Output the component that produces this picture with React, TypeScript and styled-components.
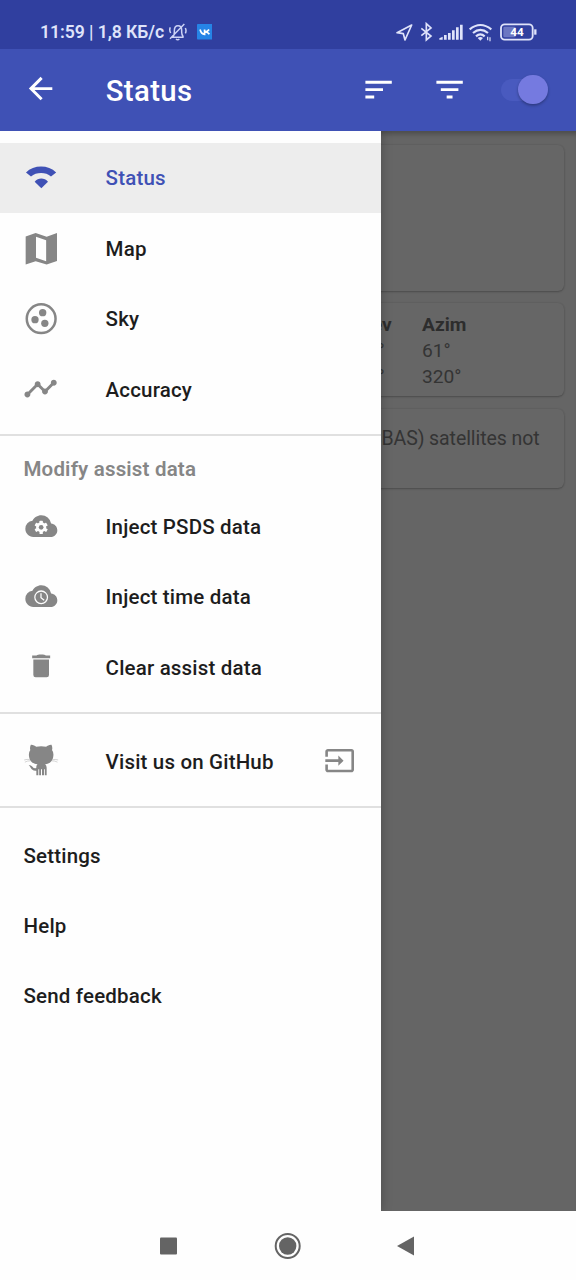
import React from "react";
import styled, { createGlobalStyle } from "styled-components";
import { MdArrowBack, MdFilterList, MdInput, MdSort, MdTimeline } from "react-icons/md";

const GlobalStyle = createGlobalStyle`
  *, *::before, *::after { box-sizing: border-box; }
  html, body { margin: 0; padding: 0; }
  body { font-family: Roboto, "Noto Sans", sans-serif; overflow: hidden; }
  svg { display: block; flex: none; }
`;

const Screen = styled.div`
  width: 576px;
  height: 1280px;
  display: flex;
  flex-direction: column;
  background: #fefefe;
  overflow: hidden;
`;

const StatusBar = styled.div`
  height: 49px;
  flex: none;
  display: flex;
  align-items: center;
  padding: 15px 37.3px 0 40px;
  background: #303f9f;
  color: #dfe3fa;
`;

const Clock = styled.span`
  width: 128px;
  font-size: 17.6px;
  font-weight: 600;
  letter-spacing: -0.06px;
  white-space: nowrap;
`;

const VkBadge = styled.svg`
  margin-left: 9.5px;
`;

const StatusIcons = styled.div`
  margin-left: auto;
  display: flex;
  align-items: center;
`;

const AppBar = styled.header`
  height: 82px;
  flex: none;
  display: flex;
  align-items: center;
  padding: 0 28.3px 1px 22.5px;
  background: #3f51b5;
  color: #fff;
  position: relative;
  z-index: 3;
`;

const BackIcon = styled(MdArrowBack)`
  margin-bottom: 1.5px;
`;

const Title = styled.h1`
  margin: 3px 0 0 48px;
  flex: 1;
  font-size: 29.3px;
  font-weight: 500;
  letter-spacing: 0.4px;
  line-height: 34px;
`;

const Actions = styled.div`
  display: flex;
  align-items: center;
  gap: 35.4px;
`;

const SwitchTrack = styled.div`
  width: 46.5px;
  height: 22px;
  margin-left: -1px;
  border-radius: 11px;
  background: #495abf;
  display: flex;
  align-items: center;
  justify-content: flex-end;
`;

const SwitchThumb = styled.div`
  width: 29.4px;
  height: 29.4px;
  flex: none;
  border-radius: 50%;
  background: #757ae0;
  box-shadow: 0 1.5px 3px rgba(0, 0, 0, 0.3);
`;

const Body = styled.main`
  height: 1080px;
  flex: none;
  position: relative;
  background: #656565;
  box-shadow: inset 0 6px 5px -3px rgba(0, 0, 0, 0.25);
  overflow: hidden;
`;

const Cards = styled.div`
  display: flex;
  flex-direction: column;
  gap: 12.3px;
  padding: 13.5px 12px 0;
`;

const Card = styled.section<{ $height: number }>`
  height: ${(p) => p.$height}px;
  border-radius: 6px;
  background: #666;
  box-shadow: 0 1px 2px rgba(0, 0, 0, 0.22), 0 0 2px rgba(0, 0, 0, 0.12);
  color: #343434;
`;

const SatelliteTable = styled.div`
  display: grid;
  grid-template-columns: 66px 142px;
  justify-content: end;
  padding-top: 9px;
  font-size: 19.2px;
  line-height: 26px;
`;

const HeadCell = styled.span`
  font-weight: 700;
  color: #2d2d2d;
`;

const Note = styled.p`
  margin: 0;
  padding: 17.4px 24.5px 0 0;
  font-size: 19.5px;
  line-height: 26px;
  letter-spacing: -0.08px;
  text-align: right;
  white-space: nowrap;
`;

const Drawer = styled.nav`
  position: absolute;
  inset: 0 auto 0 0;
  width: 381.3px;
  padding-top: 11.7px;
  background: #fefefe;
  box-shadow: 0 0 10px 1px rgba(0, 0, 0, 0.22);
`;

const MenuItem = styled.div<{ $active?: boolean }>`
  height: 70.4px;
  display: flex;
  align-items: center;
  padding: 0 25.8px 0 23.5px;
  gap: 46.9px;
  background: ${(p) => (p.$active ? "#ededed" : "transparent")};
  color: ${(p) => (p.$active ? "#3f51b5" : "#1d1d1d")};
  font-size: 20.5px;
  font-weight: 500;
  letter-spacing: 0.18px;
  white-space: nowrap;
`;

const Glyph = styled.svg<{ $active?: boolean }>`
  width: 35.2px;
  height: 35.2px;
  fill: ${(p) => (p.$active ? "#3f51b5" : "#868686")};
`;

const Label = styled.span`
  flex: 1;
  position: relative;
  top: 0.6px;
`;

const Divider = styled.hr`
  height: 1.6px;
  margin: 9.8px 0 12.2px;
  border: 0;
  background: #e0e0e0;
`;

const Subheader = styled.div`
  height: 55.4px;
  margin-top: -12.2px;
  padding: 20.5px 0 0 23.5px;
  color: #868686;
  font-size: 20.5px;
  font-weight: 600;
  letter-spacing: 0.18px;
  line-height: 26px;
`;

const NavBar = styled.footer`
  flex: 1;
  display: flex;
  align-items: center;
  justify-content: center;
  background: #fefefe;
`;

const CLOUD =
  "M19.35 10.04A7.49 7.49 0 0 0 12 4C9.11 4 6.6 5.64 5.35 8.04A5.994 5.994 0 0 0 0 14c0 3.31 2.69 6 6 6h13c2.76 0 5-2.24 5-5 0-2.64-2.05-4.78-4.65-4.96z";

/* Glyphs share one drawing grid; its origin leaves a small inset at the top left. */
const GRID = "1.5 -1 105.6 105.6";

const WifiGlyph = () => (
  <Glyph $active viewBox={GRID}>
    <path d="M7.5 36.5C31 13 74.5 13 98 36.5L82.5 48.5C67 35 38.5 35 22.5 48.5Z" />
    <path d="M33.5 64C44 51.5 63 51.5 73.5 64L53.5 83.5Z" />
  </Glyph>
);

const MapGlyph = () => (
  <Glyph viewBox={GRID}>
    <path
      fillRule="evenodd"
      d="M6.5 15.5 36.5 4.9 69.5 15.9 100.5 4.9V88.9L69.5 99.9 36.5 89.9 6.5 99.9ZM37.5 15.9V79.4L68 89.9V26.4Z"
    />
  </Glyph>
);

const SkyGlyph = () => (
  <Glyph viewBox={GRID}>
    <circle cx="53" cy="52.2" r="43.2" fill="none" stroke="#868686" strokeWidth="7.5" />
    <circle cx="57.5" cy="34" r="11" />
    <circle cx="34.5" cy="55" r="11" />
    <circle cx="64" cy="66" r="11" />
  </Glyph>
);

const TimelineGlyph = styled(MdTimeline)`
  margin: 0 0.5px 0 -0.5px;
`;

const CloudGearGlyph = () => (
  <Glyph viewBox={GRID}>
    <path d={CLOUD} transform="translate(5.5 1.1) scale(4 4.1)" />
    <g transform="translate(53 54)" fill="#fefefe">
      {[0, 60, 120].map((angle) => (
        <rect key={angle} x="-5" y="-20" width="10" height="40" rx="1.5" transform={`rotate(${angle})`} />
      ))}
      <circle r="15" />
      <circle r="7" fill="#868686" />
    </g>
  </Glyph>
);

const CloudClockGlyph = () => (
  <Glyph viewBox={GRID}>
    <path d={CLOUD} transform="translate(5.5 1.1) scale(4 4.1)" />
    <g fill="none" stroke="#fefefe" strokeWidth="3.8">
      <circle cx="53" cy="54" r="19" />
      <path d="M52.5 42V55L62 63" />
    </g>
  </Glyph>
);

const TrashGlyph = () => (
  <Glyph viewBox={GRID}>
    <path d="M26 18.5H39C42 15.5 45 15.5 53 15.5S64 15.5 67 18.5H80V26.5H26ZM29.5 30.5H76.5V77Q76.5 84 69.5 84H36.5Q29.5 84 29.5 77Z" />
  </Glyph>
);

const OctocatGlyph = () => (
  <Glyph viewBox={GRID}>
    <path d="M22 4.5C29 4 34 7.5 38 10Q53 7 68 10C72 7.5 77 4 84 4.5Q88 13 85.5 20Q91 27 89.5 38C88 54 79 61 65 62.5Q69.5 66 69.5 73V96H64V78H61.5V96H55.5V78H52.5V96H47V78H44.5V96H38.5V82C29 83 25 79 21.5 73.5Q19 69 15.5 65Q23 65 27 70Q31 76.5 38.5 74Q37.5 66 42 62.5C27 61 18 54 16.5 38Q15 27 20.5 20Q18 13 22 4.5Z" />
    <path
      d="M2 50Q11 47 19 49M4 56.5Q12 52 21 52.5M104 50Q95 47 87 49M102 56.5Q94 52 85 52.5"
      fill="none"
      stroke="#b8b8b8"
      strokeWidth="1.8"
    />
  </Glyph>
);

const BellOffIcon = () => (
  <svg width="19" height="18" viewBox="0 0 57 54" fill="none" stroke="#cdd3f5" strokeWidth="4.5">
    <path d="M11 43H47M15 42Q19 36 19 28V23Q19 8 30 8Q41 8 41 21V28Q41 36 46 42M24 48Q29 53 34 48M6 47 49 3M7 13Q3 21 8 30M52 15Q56 23 52 31" />
  </svg>
);

const VkIcon = () => (
  <VkBadge width="15.5" height="15.5" viewBox="0 0 45 45">
    <rect width="45" height="45" rx="2" fill="#2684e6" />
    <path
      d="M9 16Q12 29 22 30V16M23 23Q31 22 35 16M24 23Q31 23 36 30"
      fill="none"
      stroke="#fff"
      strokeWidth="5"
    />
  </VkBadge>
);

const SystemIcons = () => (
  <svg width="144" height="20" viewBox="0 0 432 60" fill="none" stroke="#dfe3fa">
    <path d="M6 32 50 9 30 54 25 35Z" strokeWidth="5" strokeLinejoin="round" />
    <path d="M79 19 108 42 94 54V5L108 18 79 41" strokeWidth="5" />
    <path
      d="M133 53V49L143 44V53ZM147 53V39H155V53ZM159 53V33H167V53ZM171 53V25H179V53ZM183 53V16H191V53ZM195 53V8H203V53Z"
      fill="#dfe3fa"
      stroke="none"
    />
    <path d="M224 22Q256-4 289 22M234 33Q256 14 279 33M243 43Q256 31 269 43" strokeWidth="6.5" />
    <path d="M248 48Q256 42 264 48L256 56Z" fill="#dfe3fa" stroke="none" />
    <path d="M278 44V55M285 46V58" strokeWidth="3.5" />
    <rect x="318" y="7" width="95" height="46" rx="11" strokeWidth="5.5" />
    <rect x="325" y="14" width="37" height="32" rx="4" fill="#6c77c2" stroke="none" />
    <path d="M421 22V38" strokeWidth="7" />
    <text
      x="366"
      y="42.5"
      textAnchor="middle"
      fill="#fff"
      stroke="none"
      fontFamily="Roboto"
      fontSize="35"
      fontWeight="700"
    >
      44
    </text>
  </svg>
);

export default function App() {
  return (
    <Screen>
      <GlobalStyle />
      <StatusBar>
        <Clock>11:59 | 1,8 КБ/с</Clock>
        <BellOffIcon />
        <VkIcon />
        <StatusIcons>
          <SystemIcons />
        </StatusIcons>
      </StatusBar>
      <AppBar>
        <BackIcon size={35.2} />
        <Title>Status</Title>
        <Actions>
          <MdSort size={35.2} />
          <MdFilterList size={35.2} />
          <SwitchTrack>
            <SwitchThumb />
          </SwitchTrack>
        </Actions>
      </AppBar>
      <Body>
        <Cards>
          <Card $height={146} />
          <Card $height={93.5}>
            <SatelliteTable>
              <HeadCell>Elev</HeadCell>
              <HeadCell>Azim</HeadCell>
              <span>15°</span>
              <span>61°</span>
              <span>15°</span>
              <span>320°</span>
            </SatelliteTable>
          </Card>
          <Card $height={79}>
            <Note>(SBAS) satellites not</Note>
          </Card>
        </Cards>
        <Drawer>
          <MenuItem $active>
            <WifiGlyph />
            <Label>Status</Label>
          </MenuItem>
          <MenuItem>
            <MapGlyph />
            <Label>Map</Label>
          </MenuItem>
          <MenuItem>
            <SkyGlyph />
            <Label>Sky</Label>
          </MenuItem>
          <MenuItem>
            <TimelineGlyph size={35.2} color="#868686" />
            <Label>Accuracy</Label>
          </MenuItem>
          <Divider />
          <Subheader>Modify assist data</Subheader>
          <MenuItem>
            <CloudGearGlyph />
            <Label>Inject PSDS data</Label>
          </MenuItem>
          <MenuItem>
            <CloudClockGlyph />
            <Label>Inject time data</Label>
          </MenuItem>
          <MenuItem>
            <TrashGlyph />
            <Label>Clear assist data</Label>
          </MenuItem>
          <Divider />
          <MenuItem>
            <OctocatGlyph />
            <Label>Visit us on GitHub</Label>
            <MdInput size={31.3} color="#868686" />
          </MenuItem>
          <Divider />
          <MenuItem>
            <Label>Settings</Label>
          </MenuItem>
          <MenuItem>
            <Label>Help</Label>
          </MenuItem>
          <MenuItem>
            <Label>Send feedback</Label>
          </MenuItem>
        </Drawer>
      </Body>
      <NavBar>
        <svg width="256" height="28" viewBox="0 0 256 28" fill="#646464">
          <rect x="0" y="5.5" width="17" height="17" rx="1" />
          <circle cx="127.7" cy="14" r="8.7" />
          <circle cx="127.7" cy="14" r="12" fill="none" stroke="#646464" strokeWidth="2" />
          <path d="M237 14 254 4.5V23.5Z" />
        </svg>
      </NavBar>
    </Screen>
  );
}
